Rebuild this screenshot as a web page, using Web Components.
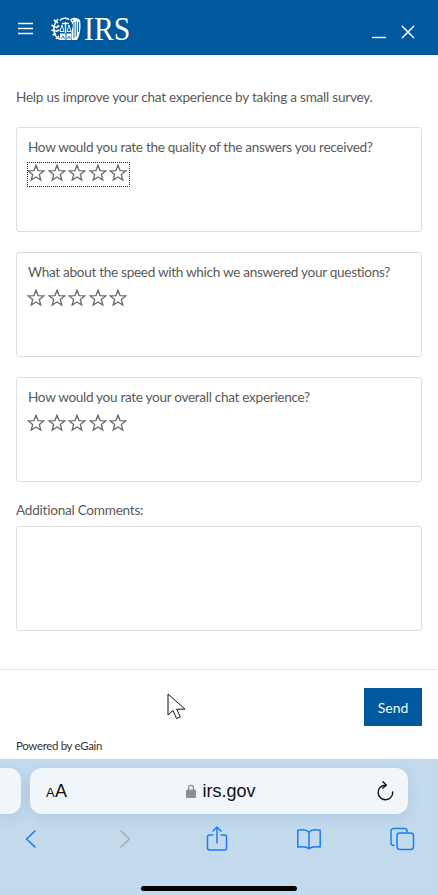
<!DOCTYPE html>
<html lang="en"><head><meta charset="utf-8"><title>IRS chat survey</title>
<style>
html,body{margin:0;padding:0;background:#fff}
body{width:438px;height:895px;overflow:hidden;font-family:Lato,"Noto Sans",sans-serif;color:#555}
</style></head><body>
<survey-app>
  <chat-header></chat-header>
  <survey-form>
    <survey-intro>Help us improve your chat experience by taking a small survey.</survey-intro>
    <rating-card focused>How would you rate the quality of the answers you received?</rating-card>
    <rating-card>What about the speed with which we answered your questions?</rating-card>
    <rating-card>How would you rate your overall chat experience?</rating-card>
    <comment-box>Additional Comments:</comment-box>
  </survey-form>
  <send-footer></send-footer>
  <safari-bar></safari-bar>
  <mouse-cursor></mouse-cursor>
</survey-app>
<script>
function def(name, html, init){
  customElements.define(name, class extends HTMLElement{
    constructor(){super();this.attachShadow({mode:'open'}).innerHTML=html;}
    connectedCallback(){ if(init) init(this); }
  });
}
def('survey-app',`<style>:host{display:flex;flex-direction:column;width:438px;height:895px;position:relative;overflow:hidden}</style><slot></slot>`);

def('chat-header',`<style>
:host{display:flex;align-items:center;height:55px;background:#00599c;flex:none;box-sizing:border-box;padding:0 23px 0 18px;color:#fff}
.menu{width:15px;height:13px;margin:2px 18px 0 0;display:block}
.logo{display:flex;align-items:center;gap:3px;margin-top:2px}
.logo svg{width:30px;height:26px;display:block}
.irs{font:400 33px/26px "Liberation Serif",serif;width:46px;display:block;transform:scaleX(.9);transform-origin:0 50%;color:#fff}
.sp{flex:1}
.ctl{display:block}
.min{width:14px;height:14px;margin:9px 15px 0 0}
.close{width:14px;height:14px;margin-top:9px}
</style>
<svg class="menu" viewBox="0 0 15 13"><path d="M0 1.500H15M0 6.500H15M0 11.500H15" stroke="#fff" stroke-width="1.400"/></svg>
<div class="logo">
<svg viewBox="0 0 30 26" fill="none" stroke="#fff">
  <path d="M7 3C3 7 1.500 14 4 19c1.500 2 3 3.500 5 4.500" stroke-width="1.500"/>
  <path d="M3 4l4 3M.5 9l4 2.500M.5 14l3.800.800M1.500 19l3.500-1.500M5 23l3-3M8 9.500l-3 2.500M8.500 14l-4 1.500" stroke-width="1.700"/>
  <path d="M9 4.500C11 2 15 1.500 18 3.500" stroke-width="1.600"/>
  <path d="M11 7.500h7M14.500 6v11" stroke-width="1.300"/>
  <path d="M11 9l-2 6.500h4zM18 9l-2 6.500h4z" stroke-width=".9"/>
  <path d="M9 17.500h5.500V24H9zM15.500 17.500H20V24h-4.500z" fill="#fff" stroke="none"/>
  <path d="M10 23l2-3 1.500 3M16.500 23l1.500-3 1.500 3" stroke="#00599c" stroke-width=".8"/>
  <path d="M19 3.500C22 .5 27 1.500 29 4c1.200 6 .500 14-3 20h-5.500V16L22 9z" fill="#fff" stroke="none"/>
  <path d="M23 6v16M25.300 5.500v15M27.500 6v10" stroke="#00599c" stroke-width=".9"/>
  <circle cx="21.500" cy="4.300" r=".8" fill="#00599c" stroke="none"/>
</svg>
<span class="irs">IRS</span>
</div>
<span class="sp"></span>
<svg class="ctl min" viewBox="0 0 14 14"><path d="M0 12.500H14" stroke="#fff" stroke-width="1.400"/></svg>
<svg class="ctl close" viewBox="0 0 14 14"><path d="M1 1L13 13M13 1L1 13" stroke="#fff" stroke-width="1.500"/></svg>
`);

def('survey-form',`<style>:host{display:flex;flex-direction:column;flex:none;box-sizing:border-box;height:615px;padding:0 16px;border-bottom:1.500px solid #e6e6e6}</style><slot></slot>`);

def('survey-intro',`<style>:host{display:block;margin:33px 0 0;height:19px;font-size:13.600px;letter-spacing:-.24px;line-height:19px;color:#5a5a5a;white-space:nowrap}</style><slot></slot>`);

const star='<svg viewBox="0 0 18 18"><path d="M9 1.300l2.050 5.300 5.650.35-4.350 3.600 1.420 5.500L9 13l-4.770 3.050 1.420-5.500L1.300 6.950l5.650-.35z" fill="none" stroke="#6c6c6c" stroke-width="1.350" stroke-linejoin="miter"/></svg>';

def('star-rating',`<style>
:host{display:flex;gap:2.500px;padding:2px 0 0 0;box-sizing:border-box;height:25px;width:102.500px;margin-left:-1px;outline:1px dotted transparent;outline-offset:-1px}
:host([focused]){outline-color:#222}
svg{width:18px;height:18px;display:block;flex:none}
</style>${star.repeat(5)}`);

def('rating-card',`<style>
:host{display:block;box-sizing:border-box;height:105px;margin-top:20px;border:1px solid #dedede;border-radius:3px;padding:10px 11px 0;background:#fff}
.q{font-size:13.600px;letter-spacing:-.31px;line-height:19px;height:19px;color:#5a5a5a;white-space:nowrap;margin-bottom:5px}
</style><div class="q"><slot></slot></div><star-rating></star-rating>`,el=>{
  if(el.hasAttribute('focused')) el.shadowRoot.querySelector('star-rating').setAttribute('focused','');
});

def('comment-box',`<style>
:host{display:block;margin-top:18.500px}
.l{font-size:13.600px;letter-spacing:-.25px;line-height:19px;height:19px;margin:0 0 6.500px;color:#5a5a5a}
.t{height:105px;box-sizing:border-box;border:1px solid #dedede;border-radius:3px;background:#fff}
</style><div class="l"><slot></slot></div><div class="t"></div>`);

def('send-footer',`<style>
:host{display:flex;flex-direction:column;flex:none;box-sizing:border-box;height:89px;padding:18px 16px 0;background:#fff}
.row{display:flex;justify-content:flex-end}
.send{width:58px;height:38px;background:#00599c;color:#f2f6fa;font-size:14px;display:flex;align-items:center;justify-content:center}
.p{font-size:11.500px;letter-spacing:-.35px;line-height:14px;color:#333;margin-top:12.500px}
</style><div class="row"><div class="send">Send</div></div><div class="p">Powered by eGain</div>`);

def('safari-bar',`<style>
:host{display:block;flex:none;height:136px;background:#c3daed;position:relative;font-family:"Liberation Sans",sans-serif}
.top{display:flex;gap:9px;padding-top:9px;height:46px}
.tab{width:21px;height:46px;background:#f1f6fb;border-radius:0 12px 12px 0;box-shadow:0 4px 14px rgba(90,120,150,.18)}
.url{width:378px;height:46px;box-sizing:border-box;padding:0 14px 0 16px;background:#f1f6fb;border-radius:12px;display:flex;align-items:center;box-shadow:0 4px 14px rgba(90,120,150,.18);color:#111}
.aa{font-size:18px;width:26px;white-space:nowrap;letter-spacing:.2px}.aa small{font-size:13px}
.mid{flex:1;display:flex;justify-content:center;align-items:center;gap:6px;font-size:18px;margin-left:-6px}
.mid svg{width:10px;height:14px}
.re{width:18px;height:20px}
.tools{display:flex;justify-content:space-between;align-items:center;padding:0 23px;height:26px;margin-top:12px}
.tools svg{display:block;fill:none;stroke:#1a7cf6;stroke-width:1.500;stroke-linecap:round;stroke-linejoin:round}
.home{position:absolute;left:141px;top:127px;width:156px;height:5px;border-radius:3px;background:#050505}
</style>
<div class="top"><div class="tab"></div><div class="url">
<span class="aa"><small>A</small>A</span>
<span class="mid"><svg viewBox="0 0 10 14"><path d="M2.500 6V3.800a2.500 2.500 0 015 0V6" fill="none" stroke="#8e8e93" stroke-width="1.300"/><rect x="0" y="5.500" width="10" height="8.500" rx="1.500" fill="#8e8e93"/></svg><span>irs.gov</span></span>
<svg class="re" viewBox="0 0 18 20" fill="none" stroke="#111" stroke-width="1.400" stroke-linecap="round" stroke-linejoin="round"><path d="M9.500 4.200A7.300 7.300 0 1 0 16.700 11"/><path d="M7 .8l3.400 3.400L6.800 7"/></svg>
</div></div>
<div class="tools">
<svg width="16" height="22" viewBox="0 0 16 22"><path d="M12 3L3.500 11 12 19" stroke-width="1.700"/></svg>
<svg width="16" height="22" viewBox="0 0 16 22" style="margin-left:66px"><path d="M4 3l8.500 8L4 19" style="stroke:#a5aeb6" stroke-width="1.700"/></svg>
<svg width="22" height="26" viewBox="0 0 22 26" style="margin-left:62px"><path d="M7 9H3.500A2 2 0 001.500 11v11a2 2 0 002 2h15a2 2 0 002-2V11a2 2 0 00-2-2H15M11 17V1.500M7 5l4-4 4 4"/></svg>
<svg width="26" height="22" viewBox="0 0 26 22" style="margin-left:56px"><path d="M13 4.500C11 2 6 1.500 1.800 2.200V19c4-.6 9-.4 11.200 1.800 2.200-2.200 7.200-2.400 11.200-1.800V2.200C20 1.500 15 2 13 4.500zM13 4.500v16"/></svg>
<svg width="25" height="24" viewBox="0 0 25 24" style="margin-left:57px"><path d="M4 18.500h-.500A2.500 2.500 0 011 16V4a2.500 2.500 0 012.500-2.500h11A2.500 2.500 0 0117 4v1"/><rect x="7" y="6" width="16.500" height="16.500" rx="3"/></svg>
</div>
<div class="home"></div>`);

def('mouse-cursor',`<style>:host{position:absolute;left:167px;top:693px;width:20px;height:29px;display:block}svg{display:block}</style>
<svg width="20" height="29" viewBox="0 0 20 29"><path d="M1 1v21l5-4.500 3.500 8 3.800-1.700-3.600-7.600H18z" fill="#fff" stroke="#111" stroke-width="1"/></svg>`);
</script>
</body></html>
